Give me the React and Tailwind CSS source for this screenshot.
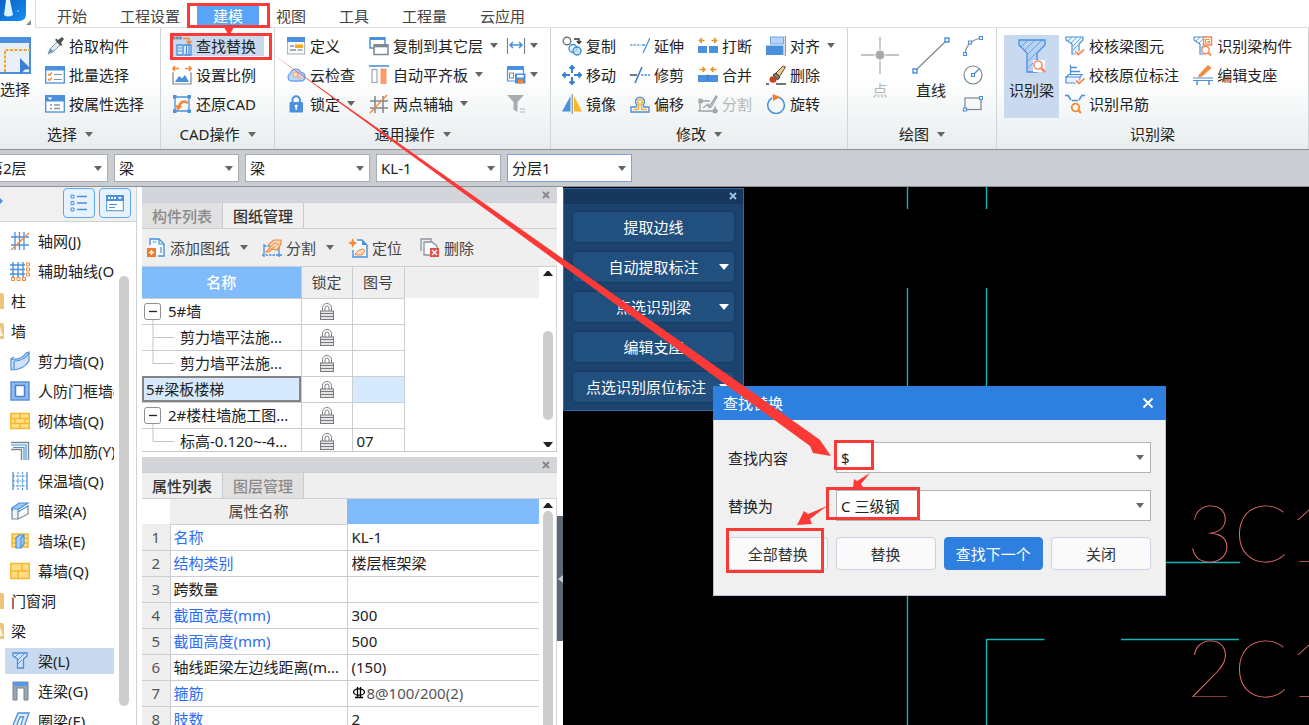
import clsx from 'clsx';

const BLUE = '#4a90dc';
const ORANGE = '#f58634';
const GRAY = '#7d8790';

const ICONS = {
  bigSelect: (
    <>
      <rect x="-10" y="1" width="40" height="35" fill="#e8eff9" stroke={BLUE} strokeWidth="2" />
      <rect x="-10" y="0" width="41" height="6" fill={BLUE} />
      <path d="M5 35V13H30" fill="none" stroke="#f5a623" strokeWidth="2" strokeDasharray="3 1.5" />
      <path d="M20 21l11 11-6 .5-5 5z" fill="#3d7fd6" />
    </>
  ),
  picker: (
    <>
      <path d="M3 18l2-5 7-7 3 3-7 7z" fill="#dfeaf6" stroke="#8a949e" />
      <path d="M3.500 17l2-4 3 2z" fill={BLUE} />
      <path d="M10 4l6 6 1.500-1.500-1.500-1.500 3-4-2-2-4 3L11.500 2.500z" fill="#4b5157" />
    </>
  ),
  batch: (
    <>
      <rect x=".7" y="2" width="18.600" height="16" fill="#fff" stroke={BLUE} strokeWidth="1.300" />
      <rect y="1" width="20" height="4.500" fill={BLUE} />
      <path d="M3 9l1.500 1.500L7 7.500M3 14l1.500 1.500L7 12.500" fill="none" stroke={ORANGE} strokeWidth="1.200" />
      <path d="M9 9.500h8M9 14.500h8" stroke="#8a949e" strokeWidth="1.200" />
    </>
  ),
  attr: (
    <>
      <rect x=".7" y="2" width="18.600" height="16" fill="#fff" stroke={BLUE} strokeWidth="1.300" />
      <rect y="1" width="20" height="6.500" fill={BLUE} />
      <path d="M2.500 3.500h5L5 6z" fill="#fff" />
      <path d="M5 11h2M9 11h6M5 14.500h2M9 14.500h6" stroke="#8a949e" strokeWidth="1.400" />
    </>
  ),
  replace: (
    <>
      <path d="M1 2h9" stroke={GRAY} strokeWidth="3" strokeDasharray="2.500 .6" />
      <path d="M11 2.500h6V7M14.500 5L17 8l2.500-3" fill="none" stroke={ORANGE} strokeWidth="1.500" />
      <path d="M5 9h6v10H5zM12 9h7v10h-7" fill="#dbe9fa" stroke={BLUE} strokeWidth="1.300" />
      <path d="M6 12h4M6 15h4M14.500 9v10M17 9v10" stroke={BLUE} strokeWidth="1.200" />
    </>
  ),
  scale: (
    <>
      <path d="M1 3.500h6M3 1L.8 3.500 3 6M19 3.500h-6M17 1l2.200 2.500L17 6" fill="none" stroke={ORANGE} strokeWidth="1.500" />
      <path d="M2 8H1v11h18V8h-1" fill="none" stroke={GRAY} strokeWidth="1.200" />
      <path d="M3 17l4-6 3 2.500 3-3.500 4 7z" fill={BLUE} />
    </>
  ),
  restore: (
    <>
      <path d="M3 1v18M17 1v18M1 3h18M1 17h18" stroke={BLUE} strokeWidth="1.300" />
      <path d="M7 13C8 8 12 6 16 9" fill="none" stroke={ORANGE} strokeWidth="2.500" />
      <path d="M3.500 11l7 1-5 5z" fill={ORANGE} />
      <path d="M1 1h3.500v3.500H1zM15.500 1H19v3.500h-3.500zM1 15.500h3.500V19H1zM15.500 15.500H19V19h-3.500z" fill={BLUE} />
    </>
  ),
  define: (
    <>
      <rect x="1.600" y="2" width="17" height="16" fill="#fafafa" stroke="#a8adb3" />
      <rect x="1" y="1" width="18" height="5" fill={BLUE} />
      <path d="M4 10h4M4 14h6" stroke="#8a949e" strokeWidth="1.300" />
      <path d="M9 8.500h8V12H9z" fill="#f5a623" />
      <path d="M11.500 14h5" stroke="#8a949e" strokeWidth="1.300" />
    </>
  ),
  cloud: (
    <>
      <path d="M5 16a4 4 0 01-.5-7.500A5.500 5.500 0 0115 7.500 4.300 4.300 0 0115.500 16z" fill="#bcd8f7" stroke="#6aa5e6" strokeWidth="1.300" />
      <circle cx="9.500" cy="9.500" r="2.300" fill="#fde3cf" stroke="#f9a878" strokeWidth="1.200" />
      <path d="M11.500 11.500L14.500 14.500" stroke="#f9a878" strokeWidth="1.500" />
    </>
  ),
  padlock: (
    <>
      <path d="M6.500 9V6a3.700 3.700 0 017.400 0v3" fill="none" stroke={BLUE} strokeWidth="2" />
      <rect x="3.500" y="8" width="13.500" height="10.500" rx="1" fill={BLUE} />
      <circle cx="10.200" cy="12" r="1.600" fill="#fff" />
      <path d="M10.200 12v4" stroke="#fff" strokeWidth="1.400" />
    </>
  ),
  copyFloor: (
    <>
      <rect x="1" y="2" width="15" height="10" fill="#fff" stroke={BLUE} strokeWidth="1.500" />
      <path d="M1 2.500h15" stroke={BLUE} strokeWidth="3" />
      <rect x="5" y="9" width="14" height="9.500" fill="#fff" stroke={GRAY} strokeWidth="1.500" />
      <path d="M5 9.800h14" stroke={GRAY} strokeWidth="3" />
    </>
  ),
  alignSlab: (
    <>
      <path d="M0 1h20" stroke={BLUE} strokeWidth="1.600" />
      <rect x="3" y="4.500" width="5" height="13" fill="#fff" stroke="#a8adb3" strokeWidth="1.300" />
      <rect x="11.500" y="3.500" width="6" height="15.500" fill="#fd9a6c" />
    </>
  ),
  twoPoint: (
    <>
      <path d="M6 2v17M14 2v17M1 7h18M1 14h18" stroke={GRAY} strokeWidth="1.500" />
      <path d="M1 19L18 1" stroke={ORANGE} strokeWidth="1.300" />
    </>
  ),
  dimension: (
    <>
      <path d="M1.500 2v16M18.500 2v16" stroke={GRAY} strokeWidth="1.200" />
      <path d="M4 9h12M7 6L4 9l3 3M13 6l3 3-3 3" fill="none" stroke={BLUE} strokeWidth="1.500" />
    </>
  ),
  saveList: (
    <>
      <path d="M1 1h17v4H1z" fill={BLUE} />
      <path d="M1.500 5v11H9M17.500 5v4" fill="none" stroke={BLUE} strokeWidth="1.200" />
      <rect x="3.500" y="8" width="4" height="5" fill="none" stroke={GRAY} />
      <path d="M9 8.500h10.500v10H9z" fill={BLUE} />
      <path d="M11 10h6.500v2.500H11z" fill="#fff" />
      <path d="M12 14.500h5v4h-5z" fill={ORANGE} />
    </>
  ),
  filter: (
    <>
      <path d="M1 1h17l-6.500 7v10l-4-2.500V8z" fill="#a9adb1" />
      <path d="M14 15h5M14 18h5" stroke="#b5b9bd" strokeWidth="1.200" />
    </>
  ),
  copy: (
    <>
      <circle cx="5" cy="5" r="3.800" fill="#fff" stroke="#6d757c" strokeWidth="1.400" />
      <path d="M12 3h5v4M14.800 5L17 7.500 19.200 5" fill="none" stroke="#333" strokeWidth="1.300" />
      <circle cx="11" cy="12.500" r="4" fill="#e7f3ff" stroke="#3e8fc9" strokeWidth="1.400" />
      <circle cx="15" cy="15" r="4" fill="#bcdcf5" fillOpacity=".8" stroke="#3e8fc9" strokeWidth="1.400" />
    </>
  ),
  move: (
    <path
      d="M10 8V1M7.500 3.500L10 1l2.500 2.500M10 12v7M7.500 16.500L10 19l2.500-2.500M8 10H1M3.500 7.500L1 10l2.500 2.500M12 10h7M16.500 7.500L19 10l-2.500 2.500"
      fill="none"
      stroke="#3a82d4"
      strokeWidth="2"
    />
  ),
  mirror: (
    <>
      <path d="M8.500 2v15.500H0z" fill={BLUE} />
      <path d="M12 2v15.500h8z" fill="#fbb829" />
      <path d="M10.300 0v20" stroke="#8a949e" strokeWidth="1.200" />
    </>
  ),
  extend: (
    <>
      <path d="M0 9h11" stroke="#77a5cf" strokeWidth="1.300" strokeDasharray="2.500 1" />
      <path d="M12 9h3" stroke={BLUE} strokeWidth="1.500" />
      <path d="M20 2l-7 15" stroke={BLUE} strokeWidth="1.300" />
    </>
  ),
  trim: (
    <>
      <path d="M0 10h7" stroke="#3a3f44" strokeWidth="1.400" />
      <path d="M11 10h9" stroke={BLUE} strokeWidth="1.400" strokeDasharray="2.500 1" />
      <path d="M12 2L5 18" stroke="#2f7bc9" strokeWidth="1.500" />
    </>
  ),
  offset: (
    <>
      <path d="M1 18v-5h5l1-2a4.500 4.500 0 116 0l1 2h5v5z" fill="none" stroke={BLUE} strokeWidth="1.400" />
      <path d="M3.500 15.500H8L9 10a2.500 2.500 0 112 0l1 5.500h5" fill="none" stroke="#f9b233" strokeWidth="1.600" />
    </>
  ),
  breakApart: (
    <>
      <path d="M1.500 4.500h5M4 2L1.500 4.500 4 7M18.500 4.500h-5M16 2l2.500 2.500L16 7" fill="none" stroke="#e8922e" strokeWidth="1.500" />
      <path d="M0 10h9v7H0zM11 10h9v7h-9z" fill={BLUE} />
    </>
  ),
  merge: (
    <>
      <path d="M1.500 4.500h5M4.500 2L7 4.500 4.500 7M18.500 4.500h-5M15.500 2L13 4.500 15.500 7" fill="none" stroke="#e8922e" strokeWidth="1.500" />
      <path d="M0 10h20v7H0z" fill={BLUE} />
      <path d="M9 10h1v5H8" fill="none" stroke="#3678c4" />
    </>
  ),
  splitGray: (
    <g fill="none" stroke="#9ea3a8" strokeWidth="1.300">
      <path d="M2 7h10M2 7v10h15v-5M0 17h20M5 14l5-4 1 3 7-11 1 1-6 10-2 1" />
      <path d="M1 5.500h3v3H1zM15.500 15.500h3v3h-3z" />
    </g>
  ),
  align: (
    <>
      <rect x="4.500" y="1" width="13" height="7" fill="#b6d4fb" stroke="#6da5e8" />
      <path d="M0 9.500h17.500V19H0z" fill={BLUE} />
      <path d="M19.300 0v20" stroke="#8a949e" strokeWidth="1.200" />
    </>
  ),
  erase: (
    <>
      <path d="M8 10l9-9 2.500 1L12 14z" fill="#f0c982" stroke="#5a4a35" />
      <path d="M7 10l3-2 4 4-2.500 3z" fill="#7a7a7a" stroke="#333" />
      <ellipse cx="7" cy="14.500" rx="3.500" ry="3.200" fill="#c4431e" />
      <path d="M0 19h3M10 19h10" stroke="#444" strokeWidth="1.300" />
    </>
  ),
  rotate: (
    <>
      <path d="M13 3.500a8.300 8.300 0 11-7 .5" fill="none" stroke={BLUE} strokeWidth="1.500" />
      <path d="M6.500 0l8 3-7.500 4z" fill="#ee7f2d" />
    </>
  ),
  arc: (
    <>
      <path d="M2 18C3 9 8 4 18 2" fill="none" stroke={GRAY} strokeWidth="1.200" />
      <path d="M.5 16.500h3v3h-3zM5.500 5h3v3h-3zM16.500 .5h3v3h-3z" fill="#fff" stroke={BLUE} strokeWidth="1.200" />
    </>
  ),
  circle: (
    <>
      <circle cx="10" cy="10" r="9" fill="none" stroke={GRAY} strokeWidth="1.200" />
      <path d="M10 10l6-6" stroke={BLUE} strokeWidth="1.200" />
      <path d="M8.500 8.500h3v3h-3z" fill="#fff" stroke={BLUE} strokeWidth="1.200" />
    </>
  ),
  rectangle: (
    <>
      <rect x="2" y="4" width="16" height="11.500" fill="none" stroke={GRAY} strokeWidth="1.200" />
      <path d="M.5 14h3v3h-3zM16.500 2.500h3v3h-3z" fill="#fff" stroke={BLUE} strokeWidth="1.200" />
    </>
  ),
  checkBeam: (
    <>
      <path d="M1 1h17v3l-4 4v10H7V8L1 4z" fill="#eaf3fd" stroke={BLUE} strokeWidth="1.200" />
      <path d="M3 5l4-4M6 7l6-6M8 10l8-8M8 14l5-5" stroke={BLUE} strokeWidth=".8" />
      <path d="M10 15.500l3.500 3 5.500-5" fill="none" stroke="#fff" strokeWidth="4" />
      <path d="M10 15.500l3.500 3 5.500-5" fill="none" stroke="#fb8a62" strokeWidth="1.800" />
    </>
  ),
  checkNote: (
    <>
      <path d="M5.500 0v10M5.500 2.500H12M5.500 6.500H15" stroke={BLUE} strokeWidth="1.300" />
      <path d="M1 12l3-2.500h13l-2 2.500zM1 12h14v6H1zM15 12l2-2.500" fill="#eaf3fd" stroke={BLUE} strokeWidth="1.200" />
      <path d="M11 15.500l3 3 5.500-5" fill="none" stroke="#fff" strokeWidth="4" />
      <path d="M11 15.500l3 3 5.500-5" fill="none" stroke="#fb8a62" strokeWidth="1.800" />
    </>
  ),
  hanger: (
    <>
      <path d="M0 1.500h4M16 1.500h4M3 1.500L6 6M17 1.500L14 6M7 6.500h6" fill="none" stroke={BLUE} strokeWidth="1.500" />
      <circle cx="10.500" cy="13.500" r="3.800" fill="none" stroke="#f28a2a" strokeWidth="1.800" />
      <path d="M13 16l3 3" stroke="#f28a2a" strokeWidth="2.200" />
    </>
  ),
  identify: (
    <>
      <path d="M1 1h13M1 1v3l6 4v10h4" fill="none" stroke={BLUE} strokeWidth="1.200" />
      <path d="M3 5l4-4M6 7l5-5M8 12l3-3" stroke={BLUE} strokeWidth=".8" />
      <rect x="10.500" y="1" width="8" height="8" fill="#fff" stroke="#f28a4a" strokeWidth="1.500" />
      <path d="M16.500 3.500h-4v3.500h4V5.500h-2" fill="none" stroke="#f28a4a" strokeWidth="1.100" />
      <circle cx="12.500" cy="14" r="3.700" fill="#fff" stroke="#fb8a62" strokeWidth="1.500" />
      <path d="M15 16.500l3 3" stroke="#fb8a62" strokeWidth="2" />
    </>
  ),
  editSupport: (
    <>
      <path d="M6 9.500L15 0l3.500 3L9 11.500l-4 1z" fill="#f28a3a" />
      <path d="M0 13h20M0 15.500h20" stroke={BLUE} strokeWidth="1.200" />
      <path d="M4 16v4M16 16v4" stroke={BLUE} strokeWidth="1.500" />
    </>
  ),
  grid: (
    <>
      <path d="M5 1v18M14 1v18M1 6h18M1 14h18M9.500 1v18" stroke={BLUE} strokeWidth="1.300" />
      <path d="M1 19L19 2" stroke={ORANGE} strokeWidth="1.200" />
    </>
  ),
  gridAux: (
    <>
      <path d="M3 1v15M8 1v15M13 1v15M0 4h15M0 8.500h15M0 13h15" stroke={BLUE} strokeWidth="1.400" />
      <path d="M1.500 16.500h3v3h-3zM7 16.500h3v3H7zM12.500 16.500h3v3h-3zM16.500 2h3v3h-3zM16.500 7h3v3h-3zM16.500 12h3v3h-3z" fill="#fff" stroke={ORANGE} />
    </>
  ),
  shearWall: (
    <>
      <path d="M1 8c7 1 12-1 15-6l3-1v9c-3 5-9 9-18 9z" fill="#cfe2f9" stroke={BLUE} strokeWidth="1.200" />
      <path d="M1 8l3-2M4 10c7 0 12-3 15-8M4 10v8" fill="none" stroke={BLUE} strokeWidth="1.200" />
    </>
  ),
  doorWall: (
    <>
      <rect x="1" y="1" width="18" height="18" fill="#8fb9f0" stroke="#5a94de" strokeWidth="1.500" />
      <rect x="5.500" y="4.500" width="9" height="11" fill="#fff" stroke="#4a82cf" strokeWidth="1.500" />
    </>
  ),
  brick: (
    <>
      <rect x=".8" y="2.500" width="18.500" height="15" fill="#ffe08a" stroke="#f9b62d" strokeWidth="1.500" />
      <path d="M1 7.500h18M1 12.500h18M10 2.500v5M5 7.500v5M15 7.500v5M10 12.500v5" stroke="#f9b62d" strokeWidth="1.500" />
    </>
  ),
  rebarWall: (
    <>
      <path d="M1 1.500h17.500V19M1 8.500h10.500V19" fill="none" stroke={GRAY} strokeWidth="1.400" />
      <path d="M1 4h15v15M3 6.500h11V19" fill="none" stroke={BLUE} strokeWidth="1.200" />
    </>
  ),
  insulation: (
    <>
      <path d="M3 1v18M17 1v18" stroke={BLUE} strokeWidth="1.300" />
      <path d="M8 1v18M12.500 1v18M3 5h14M3 10h14M3 15h14" stroke={BLUE} strokeWidth="1.100" strokeDasharray="2 1.200" />
    </>
  ),
  hiddenBeam: (
    <>
      <path d="M2 7h6v11H2z" fill="#eef4fb" stroke={GRAY} strokeWidth="1.200" />
      <path d="M8 18l10-5V4" fill="none" stroke={GRAY} strokeWidth="1.200" />
      <path d="M2 7l7-5h9l-9 6-7 0zM2 10V7M8 11l10-6" fill="#9fc6f5" stroke={BLUE} strokeWidth="1.200" />
    </>
  ),
  pier: (
    <>
      <path d="M2 3h16v13H2z" fill="#ffe08a" stroke="#f9b62d" strokeWidth="1.500" />
      <path d="M2 7.500h16M2 12h16" stroke="#f9b62d" strokeWidth="1.300" />
      <path d="M6 7l3-3h5v9l-3 4H6zM11 17V7l3-3" fill="#a9ccf7" stroke={BLUE} strokeWidth="1.200" />
    </>
  ),
  curtain: (
    <>
      <rect x=".8" y="2.500" width="18.500" height="15" fill="#ffdc85" stroke="#f9b62d" strokeWidth="1.500" />
      <path d="M1 10h18M12 2.500V10M8 10v7.500" stroke="#f9b62d" strokeWidth="1.500" />
    </>
  ),
  beam: (
    <>
      <path d="M3 2h14v3l-3.500 3v9h-6V8L3 5z" fill="#cfe2f8" stroke={BLUE} strokeWidth="1.300" />
      <path d="M5 6l4-4M8 9l7-7M8 13l4-4" stroke={BLUE} strokeWidth=".9" />
    </>
  ),
  linkBeam: (
    <>
      <path d="M3 1h15v18h-4V7H7v12H3z" fill="#9aa6b2" stroke="#76838f" />
      <path d="M3 1h15v4H3z" fill="#5a9ae4" />
    </>
  ),
  ringBeam: (
    <path d="M1 19L8 2h11l-6 17H9l4.500-13H10L5 19z" fill="#dceafb" stroke={BLUE} strokeWidth="1.300" />
  ),
  addSheet: (
    <>
      <path d="M4 7V1h9l5 5v12h-6" fill="#f4f9ff" stroke={BLUE} strokeWidth="1.400" />
      <path d="M13 1v5h5M7 4h3M15 9v6" fill="none" stroke={BLUE} strokeWidth="1.200" />
      <path d="M1 10h9v9H1z" fill="#ee7a2c" />
      <path d="M5.500 12v5M3 14.500h5" stroke="#fff" strokeWidth="1.500" />
    </>
  ),
  splitSheet: (
    <>
      <path d="M2 8h6M2 8v9h15V8M0 17h20M2 6v13M17 6v13" fill="none" stroke={BLUE} strokeWidth="1.300" strokeDasharray="2.500 1" />
      <path d="M4 14l4-4-1-4 5-4h7v4l-4 6-5-1-3 3z" fill="#fbd9bd" stroke={ORANGE} strokeWidth="1.200" />
      <path d="M8 9l5-4 4 2M9 11l5-3" fill="none" stroke={ORANGE} />
    </>
  ),
  locate: (
    <>
      <path d="M9 2h5l5 5v12H5v-7" fill="#f4f9ff" stroke={BLUE} strokeWidth="1.400" />
      <path d="M14 2v5h5z" fill={BLUE} />
      <path d="M4.500 0L6 3.500 9.500 5 6 6.500 4.500 10 3.500 6.500 0 5l3.500-1.500z" fill={ORANGE} />
      <path d="M7 16l4-4 4-1 2 2-3 4H8z" fill="#fbd9bd" stroke={ORANGE} />
    </>
  ),
  removeSheet: (
    <>
      <path d="M1 13V1h10v3" fill="none" stroke="#8a949e" strokeWidth="1.300" />
      <path d="M4 16V4h8l5 4v9H4z" fill="#fafbfc" stroke="#8a949e" strokeWidth="1.300" />
      <path d="M10 10h9v9h-9z" fill="#d9534f" />
      <path d="M12 12l5 5M17 12l-5 5" stroke="#fff" strokeWidth="1.300" />
    </>
  ),
};

function Icon({ name, size = 'size-5' }) {
  return (
    <svg viewBox="0 0 20 20" className={clsx('shrink-0', size)} aria-hidden="true">
      {ICONS[name]}
    </svg>
  );
}

function Caret({ className = 'text-[#666]' }) {
  return (
    <svg viewBox="0 0 8 5" width="8" height="5" className={clsx('shrink-0', className)} aria-hidden="true">
      <path d="M0 0h8L4 5z" fill="currentColor" />
    </svg>
  );
}

function Tool({ icon, label, caret, active, disabled }) {
  return (
    <button
      type="button"
      disabled={disabled}
      aria-label={label || icon}
      className={clsx(
        'my-1 flex h-[21px] items-center gap-1 whitespace-nowrap',
        active && 'bg-[#c8d9f0]',
        disabled && 'text-[#b4b7ba]'
      )}
    >
      <Icon name={icon} />
      {label && <span>{label}</span>}
      {caret && <Caret className={label ? 'ml-[3px] text-[#666]' : 'text-[#666]'} />}
    </button>
  );
}

function Column({ tools, className }) {
  return (
    <div className={clsx('flex flex-col', className)}>
      {tools.map((tool) => (
        <Tool key={tool.icon} {...tool} />
      ))}
    </div>
  );
}

function Group({ title, caret = true, className, footer, children }) {
  return (
    <section className="flex shrink-0 flex-col border-r border-[#d0d4d8]">
      <div className={clsx('flex h-[91px] pt-[3px]', className)}>{children}</div>
      <div className={clsx('flex h-[30px] items-center justify-center gap-2', footer)}>
        <span>{title}</span>
        {caret && <Caret />}
      </div>
    </section>
  );
}

const TABS = ['开始', '工程设置', '建模', '视图', '工具', '工程量', '云应用'];

function TabBar() {
  return (
    <header className="flex h-7 shrink-0 bg-white">
      <div className="flex w-9 shrink-0 items-start border-r border-[#dcdcdc]">
        <svg viewBox="0 0 32 26" className="h-[26px] w-8" aria-hidden="true">
          <defs>
            <linearGradient id="logo" x1="0" y1="0" x2="1" y2="1">
              <stop offset="0" stopColor="#0d5fc4" />
              <stop offset="1" stopColor="#1590f5" />
            </linearGradient>
          </defs>
          <path d="M0 0h26v14q0 7-7 7H0z" fill="url(#logo)" />
          <path d="M6 0h4l3 15q-5 3-9 0z" fill="#dff3ff" />
          <path d="M18 10l1 1-1 1-1-1z" fill="#9fd4ff" />
          <path d="M31 20v5h-5z" fill="#8a8a8a" />
        </svg>
      </div>
      <nav className="flex flex-1 items-start gap-px border-b border-[#e0e0e0] pt-[5px] pl-[5px]">
        {TABS.map((tab) => (
          <button
            key={tab}
            type="button"
            className={clsx(
              'h-[22px] px-4 whitespace-nowrap',
              tab === '建模' ? 'bg-[#5aa5f7] text-white' : 'text-[#444]'
            )}
          >
            {tab}
          </button>
        ))}
      </nav>
    </header>
  );
}

function Ribbon() {
  return (
    <div className="flex shrink-0 overflow-hidden border-b border-[#8c9196] bg-linear-to-b from-white from-40% to-[#e8edee]">
      <Group title="选择" className="gap-[14px] pr-4" footer="pr-5">
        <button type="button" className="flex w-[31px] flex-col items-start pt-1.5">
          <svg viewBox="0 0 32 38" className="h-[38px] w-8" aria-hidden="true">
            {ICONS.bigSelect}
          </svg>
          <span className="mt-1 whitespace-nowrap">选择</span>
        </button>
        <Column
          tools={[
            { icon: 'picker', label: '拾取构件' },
            { icon: 'batch', label: '批量选择' },
            { icon: 'attr', label: '按属性选择' },
          ]}
        />
      </Group>
      <Group title="CAD操作" className="pr-[10px] pl-[11px]">
        <Column
          className="w-[92px]"
          tools={[
            { icon: 'replace', label: '查找替换', active: true },
            { icon: 'scale', label: '设置比例' },
            { icon: 'restore', label: '还原CAD' },
          ]}
        />
      </Group>
      <Group title="通用操作" className="pr-3 pl-[11px]">
        <Column
          tools={[
            { icon: 'define', label: '定义' },
            { icon: 'cloud', label: '云检查' },
            { icon: 'padlock', label: '锁定', caret: true },
          ]}
        />
        <Column
          className="mr-2 ml-[14px]"
          tools={[
            { icon: 'copyFloor', label: '复制到其它层', caret: true },
            { icon: 'alignSlab', label: '自动平齐板', caret: true },
            { icon: 'twoPoint', label: '两点辅轴', caret: true },
          ]}
        />
        <Column
          tools={[
            { icon: 'dimension', caret: true },
            { icon: 'saveList', caret: true },
            { icon: 'filter', disabled: true },
          ]}
        />
      </Group>
      <Group title="修改" className="gap-[14px] pr-3 pl-[11px]">
        <Column
          tools={[
            { icon: 'copy', label: '复制' },
            { icon: 'move', label: '移动' },
            { icon: 'mirror', label: '镜像' },
          ]}
        />
        <Column
          tools={[
            { icon: 'extend', label: '延伸' },
            { icon: 'trim', label: '修剪' },
            { icon: 'offset', label: '偏移' },
          ]}
        />
        <Column
          tools={[
            { icon: 'breakApart', label: '打断' },
            { icon: 'merge', label: '合并' },
            { icon: 'splitGray', label: '分割', disabled: true },
          ]}
        />
        <Column
          tools={[
            { icon: 'align', label: '对齐', caret: true },
            { icon: 'erase', label: '删除' },
            { icon: 'rotate', label: '旋转' },
          ]}
        />
      </Group>
      <Group title="绘图" className="gap-[13px] px-[13px]">
        <button type="button" disabled className="flex flex-col items-center pt-[5px] text-[#b4b7ba]">
          <svg viewBox="0 0 38 38" className="size-[38px]" aria-hidden="true">
            <path d="M19 1v37M0 19h38" stroke="#b0b0b0" strokeWidth="1.300" />
            <circle cx="19" cy="19" r="5" fill="#a8a8a8" stroke="#fff" />
          </svg>
          <span className="mt-1.5">点</span>
        </button>
        <button type="button" className="flex flex-col items-center pt-[5px]">
          <svg viewBox="0 0 38 38" className="size-[38px]" aria-hidden="true">
            <path d="M3 35L35 4" stroke={GRAY} strokeWidth="1.200" />
            <path d="M1 33h4v4H1zM33 2h4v4h-4z" fill="#fff" stroke={BLUE} strokeWidth="1.400" />
          </svg>
          <span className="mt-1.5">直线</span>
        </button>
        <Column tools={[{ icon: 'arc' }, { icon: 'circle' }, { icon: 'rectangle' }]} />
      </Group>
      <Group title="识别梁" caret={false} className="pr-4 pl-[7px]">
        <button type="button" className="mt-1 flex h-[83px] w-[55px] flex-col items-center bg-[#c8d9f0] pt-1">
          <svg viewBox="0 0 28 35" className="h-[35px] w-7" aria-hidden="true">
            <path d="M1 1h26v5l-8 8v19H9V14L1 6z" fill="#b7d1f2" stroke={BLUE} strokeWidth="1.300" />
            <path d="M3 8l7-7M7 11L17 1M10 15L24 1M10 22l8-8M10 29l9-9" stroke={BLUE} strokeWidth=".7" />
            <path d="M15 21h12v12H15z" fill="#fff" />
            <circle cx="20" cy="26" r="4" fill="#fff" stroke="#fb8a62" strokeWidth="1.600" />
            <path d="M23 29l4 4" stroke="#fb8a62" strokeWidth="2.500" />
          </svg>
          <span className="mt-1.5">识别梁</span>
        </button>
        <Column
          className="mr-[14px] ml-1.5"
          tools={[
            { icon: 'checkBeam', label: '校核梁图元' },
            { icon: 'checkNote', label: '校核原位标注' },
            { icon: 'hanger', label: '识别吊筋' },
          ]}
        />
        <Column
          tools={[
            { icon: 'identify', label: '识别梁构件' },
            { icon: 'editSupport', label: '编辑支座' },
          ]}
        />
      </Group>
    </div>
  );
}

function Combo({ id, label, value, className, arrow = 'right-[5px]' }) {
  return (
    <div className={clsx('relative flex border bg-white', className)}>
      <select
        id={id}
        aria-label={label}
        defaultValue={value}
        className="w-full appearance-none pl-1 outline-none"
      >
        <option>{value}</option>
      </select>
      <span className={clsx('pointer-events-none absolute inset-y-0 flex items-center', arrow)}>
        <Caret />
      </span>
    </div>
  );
}

const FILTERS = [
  { id: 'floor', label: '楼层', value: '第2层' },
  { id: 'category', label: '构件类别', value: '梁' },
  { id: 'type', label: '构件类型', value: '梁' },
  { id: 'component', label: '构件', value: 'KL-1' },
  { id: 'layer', label: '分层', value: '分层1', focused: true },
];

function FilterBar() {
  return (
    <div className="shrink-0 overflow-hidden border-b border-[#8c9196] bg-[#c9ccd1] py-1">
      <div className="-ml-[17px] flex gap-1.5">
        {FILTERS.map(({ id, label, value, focused }) => (
          <Combo
            key={id}
            id={id}
            label={label}
            value={value}
            className={clsx('h-7 w-[125px] shrink-0', focused ? 'border-[#7f9fe6]' : 'border-[#a9acb0]')}
          />
        ))}
      </div>
    </div>
  );
}

const TREE = [
  { label: '轴网(J)', icon: 'grid' },
  { label: '辅助轴线(O)', icon: 'gridAux' },
  { label: '柱', folder: 'closed' },
  { label: '墙', folder: 'open' },
  { label: '剪力墙(Q)', icon: 'shearWall' },
  { label: '人防门框墙(RF)', icon: 'doorWall' },
  { label: '砌体墙(Q)', icon: 'brick' },
  { label: '砌体加筋(Y)', icon: 'rebarWall' },
  { label: '保温墙(Q)', icon: 'insulation' },
  { label: '暗梁(A)', icon: 'hiddenBeam' },
  { label: '墙垛(E)', icon: 'pier' },
  { label: '幕墙(Q)', icon: 'curtain' },
  { label: '门窗洞', folder: 'closed' },
  { label: '梁', folder: 'open' },
  { label: '梁(L)', icon: 'beam', selected: true },
  { label: '连梁(G)', icon: 'linkBeam' },
  { label: '圈梁(E)', icon: 'ringBeam' },
];

function Sidebar() {
  return (
    <aside className="flex w-[137px] shrink-0 flex-col border-r border-[#cfd2d6]">
      <div className="flex h-[35px] shrink-0 items-center justify-between border-b border-[#cfd2d6] bg-[#f0f0f0] pr-[5px] pb-0.5">
        <svg viewBox="0 0 4 8" className="mb-1 h-2 w-1" aria-hidden="true">
          <path d="M0 1l3 3-3 3z" fill={BLUE} />
        </svg>
        <div className="flex gap-1">
          <button type="button" aria-label="列表" className="flex h-[30px] w-8 items-center justify-center rounded border border-[#5aa7f5] bg-[#e8f2fd]">
            <svg viewBox="0 0 18 18" className="size-[18px]" fill="none" stroke={BLUE} aria-hidden="true">
              <path d="M1 1h3v3H1zM1 7.500h3v3H1zM1 14h3v3H1z" />
              <path d="M7 2.500h10M7 9h10M7 15.500h10" strokeWidth="1.300" />
            </svg>
          </button>
          <button type="button" aria-label="属性" className="flex h-[30px] w-8 items-center justify-center rounded border border-[#5aa7f5] bg-[#e8f2fd]">
            <svg viewBox="0 0 18 18" className="size-[18px]" aria-hidden="true">
              <rect x=".7" y="1.700" width="16.600" height="15" fill="#fff" stroke={BLUE} />
              <rect y="1" width="18" height="6" fill={BLUE} />
              <path d="M2 3h2v2H2zM5 3h2v2H5zM8 3h2v2H8zM12 3h4l-2 2.500z" fill="#fff" />
              <path d="M3 10.500h8M3 13.500h6" stroke={BLUE} />
            </svg>
          </button>
        </div>
      </div>
      <div className="flex min-h-0 flex-1 overflow-hidden">
        <ul className="flex w-[114px] flex-col gap-1 overflow-hidden pt-1.5">
          {TREE.map(({ label, icon, folder, selected }) => (
            <li
              key={label}
              className={clsx('flex h-[26px] shrink-0 items-center whitespace-nowrap', folder ? 'gap-[7px]' : 'pl-[5px]')}
            >
              {folder ? (
                <svg viewBox="0 0 4 16" className="h-4 w-1" aria-hidden="true">
                  <path d="M0 0h3l1 2v14H0z" fill="#ecc57a" />
                  {folder === 'open' && <path d="M0 4l3 9H0z" fill="#fff6e0" />}
                </svg>
              ) : null}
              <button
                type="button"
                className={clsx(
                  'flex h-full flex-1 items-center gap-2',
                  !folder && 'pl-[5px]',
                  selected && 'bg-[#c8d9f0]'
                )}
              >
                {icon && <Icon name={icon} />}
                {label}
              </button>
            </li>
          ))}
        </ul>
        <div className="ml-[5px] pt-[54px]">
          <div className="h-[430px] w-[10px] rounded-full bg-[#cdcdcd]" />
        </div>
      </div>
    </aside>
  );
}

function PanelHeader({ tabs, active }) {
  return (
    <>
      <div className="flex h-[15px] shrink-0 items-center justify-end bg-[#d3d5da] pr-[7px]">
        <button type="button" aria-label="关闭面板">
          <svg viewBox="0 0 8 8" className="size-2" aria-hidden="true">
            <path d="M1 1l6 6M7 1L1 7" stroke="#858585" strokeWidth="1.800" />
          </svg>
        </button>
      </div>
      <div role="tablist" className="flex h-[27px] shrink-0 border-y border-[#cbd0d6] bg-[#efefef]">
        {tabs.map((tab) => (
          <button
            key={tab}
            type="button"
            role="tab"
            aria-selected={tab === active}
            className={clsx(
              'border-r border-[#c6cbd1] px-[10px] font-medium',
              tab === active ? 'text-[#333]' : 'bg-[#e1e1e1] text-[#8a8a8a]'
            )}
          >
            {tab}
          </button>
        ))}
      </div>
    </>
  );
}

function ScrollArrow({ down }) {
  return (
    <svg viewBox="0 0 10 6" className={clsx('h-1.5 w-[10px] shrink-0', down && 'rotate-180')} aria-hidden="true">
      <path d="M0 6l4-5h2l4 5z" fill="#222" />
    </svg>
  );
}

const DRAWINGS = [
  { name: '5#墙', level: 0 },
  { name: '剪力墙平法施...', level: 1 },
  { name: '剪力墙平法施...', level: 1, last: true },
  { name: '5#梁板楼梯', selected: true },
  { name: '2#楼柱墙施工图...', level: 0 },
  { name: '标高-0.120~-4...', level: 1, last: true, no: '07' },
];

function TreeMark({ level, last }) {
  if (level === 0) {
    return (
      <svg viewBox="0 0 26 26" className="h-[26px] w-[26px] shrink-0" aria-hidden="true">
        <rect x="2.500" y="5.500" width="16" height="16" rx="2" fill="#fff" stroke="#8e8e8e" />
        <path d="M7 13.500h8" stroke="#222" strokeWidth="1.300" />
        <path d="M11 22v4" stroke="#c4c4c4" />
      </svg>
    );
  }
  return (
    <svg viewBox="0 0 38 26" className="h-[26px] w-[38px] shrink-0" aria-hidden="true">
      <path d={last ? 'M11 0v13.500h21' : 'M11 0v26M11 13.500h21'} fill="none" stroke="#c4c4c4" />
    </svg>
  );
}

function LockMark() {
  return (
    <svg viewBox="0 0 14 17" className="mx-auto h-[17px] w-[14px]" aria-label="锁定">
      <path d="M2.500 8V4.500a4.500 4 0 019 0V8M5 8V5a2 2 0 014 0v3" fill="none" stroke="#7c8084" />
      <rect x=".5" y="8" width="13" height="8.500" fill="#e4e4e4" stroke="#777b7f" />
      <path d="M1 10.500h12M1 13.500h12" stroke="#777b7f" />
    </svg>
  );
}

const SHEET_TOOLS = [
  { icon: 'addSheet', label: '添加图纸', caret: true },
  { icon: 'splitSheet', label: '分割', caret: true },
  { icon: 'locate', label: '定位' },
  { icon: 'removeSheet', label: '删除' },
];

function DrawingPanel() {
  return (
    <section className="flex h-[265px] shrink-0 flex-col overflow-hidden border-b border-[#c3c8cd]">
      <PanelHeader tabs={['构件列表', '图纸管理']} active="图纸管理" />
      <div className="flex h-[37px] shrink-0 items-center bg-[#efefef] pl-1 text-[#444]">
        {SHEET_TOOLS.map(({ icon, label, caret }) => (
          <button key={icon} type="button" className="mr-[14px] flex items-center gap-1">
            <Icon name={icon} />
            <span className={caret ? 'mr-1.5' : 'mr-1'}>{label}</span>
            {caret && <Caret />}
          </button>
        ))}
      </div>
      <div className="flex min-h-0 flex-1 border-t border-[#c9ced3]">
        <div className="flex min-w-0 flex-1 items-start">
          <table className="w-[262px] table-fixed border-collapse">
            <thead>
              <tr className="h-[31px] border-b border-[#c9ced3] bg-[#efefef] text-[#444]">
                <th className="w-[159px] border-r border-[#c9ced3] bg-[#80bbfb] font-medium text-white">名称</th>
                <th className="w-[51px] border-r border-[#c9ced3] font-normal">锁定</th>
                <th className="w-[52px] border-r border-[#c9ced3] font-normal">图号</th>
              </tr>
            </thead>
            <tbody>
              {DRAWINGS.map(({ name, level, last, no, selected }, i) => (
                <tr key={i} className="h-[26px] border-b border-[#c9ced3]">
                  <td
                    className={clsx(
                      'overflow-hidden border-r border-[#c9ced3] p-0',
                      selected && 'bg-[#d6e9fd] outline-2 -outline-offset-2 outline-[#858585]'
                    )}
                  >
                    <div className={clsx('flex h-[25px] items-center whitespace-nowrap', selected && 'pl-1')}>
                      {!selected && <TreeMark level={level} last={last} />}
                      {name}
                    </div>
                  </td>
                  <td className="border-r border-[#c9ced3] p-0">
                    <LockMark />
                  </td>
                  <td className={clsx('border-r border-[#c9ced3] p-0 pl-1', selected && 'bg-[#d6e9fd]')}>{no}</td>
                </tr>
              ))}
            </tbody>
          </table>
          <div className="h-[31px] flex-1 bg-[#efefef]" />
        </div>
        <div className="flex w-[18px] flex-col items-center justify-between border-r border-[#cfd2d6] py-[3px]">
          <ScrollArrow />
          <div className="mt-8 h-[89px] w-[10px] rounded-full bg-[#cdcdcd]" />
          <ScrollArrow down />
        </div>
      </div>
    </section>
  );
}

const PROPERTIES = [
  { name: '名称', value: 'KL-1', link: true },
  { name: '结构类别', value: '楼层框架梁', link: true },
  { name: '跨数量', value: '' },
  { name: '截面宽度(mm)', value: '300', link: true },
  { name: '截面高度(mm)', value: '500', link: true },
  { name: '轴线距梁左边线距离(m...', value: '(150)' },
  { name: '箍筋', value: '8@100/200(2)', link: true, rebar: true },
  { name: '肢数', value: '2', link: true },
];

function PropertyPanel() {
  return (
    <section className="mt-[5px] flex min-h-0 flex-1 flex-col overflow-hidden">
      <PanelHeader tabs={['属性列表', '图层管理']} active="属性列表" />
      <div className="flex min-h-0 flex-1 overflow-hidden">
        <div className="min-w-0 flex-1">
          <table className="w-full table-fixed border-collapse">
            <thead>
              <tr className="h-[25px] text-[#444]">
                <th className="w-7" aria-label="序号" />
                <th className="w-[177px] border-b border-[#d0d3d6] bg-[#efefef] font-normal">属性名称</th>
                <th className="bg-[#80bbfb]" aria-label="属性值" />
              </tr>
            </thead>
            <tbody>
              {PROPERTIES.map(({ name, value, link, rebar }, i) => (
                <tr key={name} className="h-[26px] border-b border-[#c9ced3]">
                  <td className="border-r border-[#c9ced3] bg-[#efefef] p-0 text-center text-[#555]">{i + 1}</td>
                  <td
                    className={clsx(
                      'border-r border-[#c9ced3] p-0 pl-[3px] whitespace-nowrap',
                      link ? 'text-[#2b6ef2]' : 'text-[#222]'
                    )}
                  >
                    {name}
                  </td>
                  <td className={clsx('p-0 pl-1 whitespace-nowrap', rebar && 'text-[#555]')}>
                    <span className="flex items-center gap-px">
                      {rebar && (
                        <svg viewBox="0 0 14 14" className="size-[14px]" fill="none" stroke="#000" aria-hidden="true">
                          <ellipse cx="7" cy="6" rx="5.500" ry="3.200" strokeWidth="1.300" />
                          <path d="M5.500 1v11M8.500 1v11M3 11.500h8" strokeWidth="1.300" />
                        </svg>
                      )}
                      {value}
                    </span>
                  </td>
                </tr>
              ))}
            </tbody>
          </table>
        </div>
        <div className="flex w-[18px] flex-col items-center gap-[3px] border-r border-[#cfd2d6] pt-[3px]">
          <ScrollArrow />
          <div className="w-[10px] flex-1 rounded-t-full bg-[#cdcdcd]" />
        </div>
      </div>
    </section>
  );
}

const BEAM_ACTIONS = [
  { label: '提取边线' },
  { label: '自动提取标注', menu: true },
  { label: '点选识别梁', menu: true },
  { label: '编辑支座' },
  { label: '点选识别原位标注', menu: true },
];

function BeamPalette() {
  return (
    <div className="absolute top-px left-0 w-[181px] border border-[#2b6aa6] bg-[#1c436d] text-white">
      <div className="flex h-[15px] items-center justify-end border-b border-[#15345a] bg-[#17375c] pr-1.5">
        <button type="button" aria-label="关闭识别面板">
          <svg viewBox="0 0 8 8" className="size-2" aria-hidden="true">
            <path d="M1 1l6 6M7 1L1 7" stroke="#9cc4ea" strokeWidth="1.800" />
          </svg>
        </button>
      </div>
      <div className="flex flex-col gap-2 px-2 py-[7px]">
        {BEAM_ACTIONS.map(({ label, menu }) => (
          <button
            key={label}
            type="button"
            className="flex h-8 items-center justify-center rounded-sm border border-[#163a63] bg-[#21507f] whitespace-nowrap"
          >
            <span className="w-7 shrink" />
            <span className="shrink-0">{label}</span>
            <span className="w-7 shrink-0" />
            {menu && (
              <span className="pointer-events-none absolute right-3.5">
                <svg viewBox="0 0 10 6" className="h-1.5 w-[10px]" aria-hidden="true">
                  <path d="M0 0h10L5 6z" fill="#fff" />
                </svg>
              </span>
            )}
          </button>
        ))}
      </div>
    </div>
  );
}

function ReplaceDialog() {
  return (
    <div
      role="dialog"
      aria-labelledby="replace-title"
      className="absolute top-[199px] left-[150px] w-[453px] border border-[#b9c3d3] bg-[#f0f0f0]"
    >
      <div className="-mx-px -mt-px flex h-[34px] items-center justify-between bg-[#2e80e0] pr-3 pl-[10px] text-white">
        <h2 id="replace-title">查找替换</h2>
        <button type="button" aria-label="关闭对话框">
          <svg viewBox="0 0 12 12" className="size-3" aria-hidden="true">
            <path d="M1.500 1.500l9 9M10.500 1.500l-9 9" stroke="#fff" strokeWidth="2" />
          </svg>
        </button>
      </div>
      <form className="px-[14px] pt-[22px] pb-[25px]">
        <div className="grid grid-cols-[108px_1fr] items-center gap-y-[17px]">
          <label htmlFor="find">查找内容</label>
          <Combo id="find" value="$" className="h-[31px] border-[#b3b3b3]" arrow="right-1.5" />
          <label htmlFor="replace">替换为</label>
          <Combo id="replace" value="C 三级钢" className="h-[31px] border-[#b3b3b3]" arrow="right-1.5" />
        </div>
        <div className="mt-4 grid grid-cols-4 gap-2 text-[#333]">
          {['全部替换', '替换', '查找下一个', '关闭'].map((label) => (
            <button
              key={label}
              type="button"
              className={clsx(
                'h-[33px] rounded border whitespace-nowrap',
                label === '查找下一个' ? 'border-[#2e80e0] bg-[#2e80e0] text-white' : 'border-[#ccd3e0] bg-[#fafafa]'
              )}
            >
              {label}
            </button>
          ))}
        </div>
      </form>
    </div>
  );
}

function Canvas() {
  return (
    <main className="relative min-w-0 flex-1 overflow-hidden bg-black">
      <svg className="absolute inset-0 size-full" aria-label="梁平面图">
        <path
          d="M344.500 0v22M423.500 0v22M344.500 101v440M423.500 101v200M603 375.500h74M423.500 540V452.500h58M558 452.500h118"
          fill="none"
          stroke="#0fb5b5"
          strokeWidth="1.400"
        />
        <g fill="#e8706c" fontSize="80" fontFamily="Lato, sans-serif" fontWeight="100">
          <text x="624" y="375">3C1</text>
          <text x="624" y="510">2C1</text>
        </g>
      </svg>
      <BeamPalette />
      <ReplaceDialog />
    </main>
  );
}

// Red walkthrough marks laid over the whole window
function Marks() {
  return (
    <svg className="pointer-events-none absolute inset-0 size-full" aria-hidden="true">
      <g fill="none" stroke="#fb3a38" strokeWidth="3">
        <rect x="188.500" y="4.500" width="80" height="22" />
        <rect x="171.500" y="34.500" width="99" height="24" />
        <rect x="835.500" y="441.500" width="37" height="27" />
        <rect x="827.500" y="488.500" width="91" height="30" />
        <rect x="727.500" y="529.500" width="95" height="42" />
      </g>
      <g fill="#fb3a38">
        <path d="M224 27h10l-5 9z" />
        <path d="M271 53L816 437l4 3 11 16-18-3-3-7z" />
        <path d="M870 473l-13 8-3-2-1 9 10-1-2-3z" />
        <path d="M827 506l-19 8-4-3-7 14 15-1-2-5z" />
      </g>
    </svg>
  );
}

export default function App() {
  return (
    <div className="relative flex h-screen flex-col overflow-hidden bg-white font-['Noto_Sans','Noto_Sans_CJK_SC',sans-serif] text-[15px] leading-5 text-[#222]">
      <TabBar />
      <Ribbon />
      <FilterBar />
      <div className="flex min-h-0 flex-1">
        <Sidebar />
        <div className="ml-[5px] flex w-[415px] shrink-0 flex-col">
          <DrawingPanel />
          <PropertyPanel />
        </div>
        <div className="flex w-1.5 shrink-0 flex-col justify-end pb-[84px]">
          <button type="button" aria-label="收起" className="flex h-[125px] items-center bg-[#5c6874]">
            <svg viewBox="0 0 6 10" className="h-[10px] w-1.5" aria-hidden="true">
              <path d="M6 1v8L1 5z" fill="#c3c9cf" />
            </svg>
          </button>
        </div>
        <Canvas />
      </div>
      <Marks />
    </div>
  );
}
